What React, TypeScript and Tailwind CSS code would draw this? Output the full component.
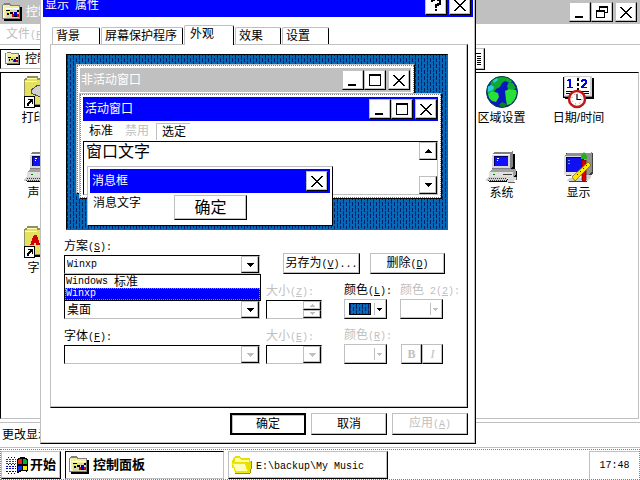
import React from 'react';
import type { ReactNode } from 'react';

const raised = 'bg-white border border-t-[#c0c0c0] border-l-[#c0c0c0] border-r-black border-b-black shadow-[inset_-1px_-1px_0_#c0c0c0]';
const sunken = 'bg-white border border-t-black border-l-black border-r-[#c0c0c0] border-b-[#c0c0c0]';
const pattern = 'bg-[#0868b8] bg-[image:conic-gradient(from_270deg_at_1px_5px,#002468_25%,transparent_0),conic-gradient(from_270deg_at_1px_4px,#002468_25%,transparent_0)] bg-[length:6px_6px] bg-[position:0_0,3px_3px]';

// Half width latin text, as drawn next to the Chinese glyphs
function Mono({ children }: { children: ReactNode }) {
    return <span className="font-['Liberation_Mono',monospace] text-[10px] whitespace-pre">{children}</span>;
}

function Key({ k, tail = '' }: { k: string; tail?: string }) {
    return <Mono>(<u>{k}</u>){tail}</Mono>;
}

function Arrow({ up = false, small = false, color = '#000' }: { up?: boolean; small?: boolean; color?: string }) {
    return (
        <svg width={small ? 5 : 7} height={small ? 3 : 4} viewBox="0 0 7 4" shapeRendering="crispEdges" aria-hidden="true">
            <path fill={color} d={up ? 'M3 0h1v1h1v1h1v1h1v1H0V3h1V2h1V1h1z' : 'M0 0h7v1H6v1H5v1H4v1H3V3H2V2H1V1H0z'} />
        </svg>
    );
}

function CaptionButton({ kind }: { kind: 'min' | 'max' | 'restore' | 'close' | 'help' }) {
    return (
        <button aria-label={kind} className={`${raised} flex h-[20px] w-[22px] shrink-0 items-center justify-center`}>
            <svg width="14" height="14" viewBox="0 0 14 14" fill="none" stroke="#000" shapeRendering="crispEdges">
                {kind === 'min' && <path strokeWidth="2" d="M2 12h8" />}
                {kind === 'max' && <path d="M1.5 2v10.500h11V2M1 1.500h12M1 2.500h12" />}
                {kind === 'restore' && <path d="M4.500 5V1.500h8v6H10M4 2.500h9M1.500 6v6.500h8V6M1 5.500h9M1 6.500h9" />}
                {kind === 'close' && (
                    <path
                        fill="#000"
                        stroke="none"
                        d="M1 2h2v1h1v1h1v1h1v1h2V5h1V4h1V3h1V2h2v1h-1v1h-1v1h-1v1H9v1H8v1h1v1h1v1h1v1h1v1h1v1h-2v-1h-1v-1H9v-1H8V9H6v1H5v1H4v1H3v1H1v-1h1v-1h1v-1h1V9h1V8h1V7H5V6H4V5H3V4H2V3H1z"
                    />
                )}
                {kind === 'help' && <path strokeWidth="2" d="M3 4V2h2V1h4v1h2v4H9v1H7v3M7 11v2" />}
            </svg>
        </button>
    );
}

function ControlFolder({ size = 20 }: { size?: number }) {
    return (
        <svg width={size} height={size} viewBox="0 0 20 20" shapeRendering="crispEdges" aria-hidden="true" className="shrink-0">
            <path fill="#000" d="M2 5h18v14H2z" />
            <path fill="#808080" d="M0 3h1V2h1V1h6v1h1v1h9v14H0z" />
            <path fill="#f0f0a0" d="M1 3h7v1h9v12H1z" />
            <path fill="#fff" d="M1 4h1v12H1zM3 6h14v1H3z" />
            <path fill="#d8d8b0" d="M4 8h13v8H4z" />
            <path fill="#000" d="M4 8h4v1H4zM8 10h3v2H8zM5 11h2v2H5zM12 14h3v1h-3zM15 8h2v2h-2z" />
            <path fill="#0000c0" d="M12 10h3v4h-3z" />
            <path fill="#d00000" d="M10 12h2v3h-2zM15 12h2v3h-2z" />
            <path fill="#ffff00" d="M6 9h2v2H6z" />
        </svg>
    );
}

function YellowFolder() {
    return (
        <svg width="22" height="20" viewBox="0 0 22 20" shapeRendering="crispEdges" aria-hidden="true" className="shrink-0">
            <path fill="#909000" d="M4 18h15v1H4zM20 6h1v8h-1v4h-1V6z" />
            <path fill="#e8e000" d="M2 3h1V2h1V1h5v1h1v1h9v3h1v8h-1v4H4v-2H3v-3H1V5h1z" />
            <path fill="#ffffa0" d="M4 3h5v1h1v1h8v2H4z" />
            <path fill="#f0e800" d="M1 8h14v2h1v3h1v3h1v2H4v-2H3v-3H2v-2H1z" />
            <path fill="#ffffb8" d="M2 9h12v2h1v3h1v2H5v-1H4v-3H3v-2H2z" />
        </svg>
    );
}

function WindowsFlag() {
    return (
        <svg width="24" height="18" viewBox="0 0 24 18" shapeRendering="crispEdges" aria-hidden="true" className="shrink-0">
            <path stroke="#e00000" strokeDasharray="2 1" d="M1 3.500h10M1 5.500h10M1 7.500h10" />
            <path stroke="#0000c0" strokeDasharray="2 1" d="M1 10.500h10M1 12.500h10M1 15.500h10" />
            <path stroke="#000" strokeDasharray="1 2" d="M3 1.500h8M3 8.500h8M3 17.500h8" />
            <path fill="#000" d="M12 3h1V2h2V1h5v1h2v1h1v12h-1v1h-1v-1h-5v1h-2v1h-2z" />
            <path fill="#f02010" d="M14 3h3v5h-4V4h1z" />
            <path fill="#00b030" d="M18 3h3v1h1v4h-4z" />
            <path fill="#1030f0" d="M13 10h4v4h-3v1h-1z" />
            <path fill="#f8e800" d="M18 10h4v4h-4z" />
        </svg>
    );
}

function Globe() {
    return (
        <svg width="32" height="32" viewBox="0 0 32 32" aria-hidden="true">
            <circle cx="16" cy="16" r="15.500" fill="#0818c0" />
            <path fill="#10a830" d="M5 5l5-4 6-1 7 2 4 3-3 2-5-2-3 2-2 4-4 2-3 4-5 1-1-3 3-4z" />
            <path fill="#28d0d8" d="M1 11l4-2 3 2-1 3-5 2zM7 4l4-2 1 2-4 3z" />
            <path fill="#10a830" d="M23 6l4 1 3 5-3 2-5-1-1-3z" />
            <path fill="#28e038" d="M2 18l4-3 6 2 1 4-3 5-4-1-3-3zM19 15l4-2 7 1 1 3-2 6-4 5-4 1-1-5z" />
            <path fill="#08801c" d="M13 29l3-3 5 2-2 3-4 0z" />
            <circle cx="16" cy="16" r="15.500" fill="none" stroke="#084048" />
        </svg>
    );
}

function Calendar() {
    return (
        <svg width="32" height="34" viewBox="0 0 32 34" shapeRendering="crispEdges" aria-hidden="true">
            <path fill="#000" d="M2 2h29v21H2z" />
            <path fill="#808080" d="M0 1h29v20H0z" />
            <path fill="#d0d0d0" d="M1 0h28v20H1z" />
            <path fill="#fff" d="M2 1h11l2 2 2-2h10v18H17l-2 1-2-1H2z" />
            <path fill="#000" d="M0 1h1v20H0zM0 21h31v1H0zM14 2h2v3h-2zM14 7h2v3h-2zM14 12h2v3h-2zM3 15h8v1H3zM18 15h8v1h-8zM3 17h8v1H3zM18 17h8v1h-8z" />
            <path fill="#0000e0" d="M5 3h3v8h2v1H4v-1h2V5H4V4h1zM19 3h4v1h1v4h-1v1h-1v1h-1v1h3v1h-6v-2h1V9h1V8h1V7h1V5h-2v1h-2V4h1z" />
            <g shapeRendering="auto">
                <circle cx="14" cy="23" r="8" fill="#fff" stroke="#c01818" strokeWidth="2.500" />
                <path stroke="#000" fill="none" strokeWidth="1.200" d="M14 18v5.500h4" />
                <path stroke="#e06060" strokeDasharray="1 3" fill="none" d="M14 18a5 5 0 1 1-.1 0" />
            </g>
        </svg>
    );
}

function Computer() {
    return (
        <svg width="32" height="32" viewBox="0 0 32 32" shapeRendering="crispEdges" aria-hidden="true">
            <path fill="#000" d="M8 3h21v15H8zM6 20h25v6H6zM3 28h20v3H3z" />
            <path fill="#808080" d="M6 3l3-3h18v15l-3 3H6z" />
            <path fill="#d8d8d8" d="M6 3h18v14H6z" />
            <path fill="#fff" d="M8 0h18v1H8zM6 3h18v1H6z" />
            <path fill="#000060" d="M8 5h14v10H8z" />
            <path fill="#1010ff" d="M9 6h13v9H9z" />
            <path fill="#fff" d="M11 7h2v1h-2zM11 9h1v1h-1z" />
            <path fill="#a0a0a0" d="M3 21l3-3h24v5l-2 3H3z" />
            <path fill="#e0e0e0" d="M3 21h24v5H3z" />
            <path fill="#008000" d="M7 23h2v1H7z" />
            <path fill="#404040" d="M17 23h9v1h-9z" />
            <path fill="#d0d0d0" d="M2 26h20l-2 4H0v-2h1z" />
            <path stroke="#404040" strokeDasharray="1 1" d="M3 27.500h17M2 29.500h17" />
            <path fill="#d8d8d8" d="M22 26h8v3h-2v2h-7v-2h1z" />
            <path fill="#606060" d="M22 31h7v1h-7zM30 26h1v3h-1z" />
        </svg>
    );
}

function DisplayIcon() {
    return (
        <svg width="32" height="32" viewBox="0 0 32 32" shapeRendering="crispEdges" aria-hidden="true">
            <path fill="#404040" d="M3 2h27v20l-3 3H3zM6 29h18v2H6z" />
            <path fill="#909090" d="M1 5l5-4h23v20l-4 3H1z" />
            <path fill="#e0e0e0" d="M1 5h22v19H1z" />
            <path fill="#fff" d="M5 1h23v1H5z" />
            <path fill="#000060" d="M3 6h18v15H3z" />
            <path fill="#1010f0" d="M4 7h17v14H4z" />
            <path fill="#60a0ff" d="M5 9h2v1H5zM5 12h2v1H5z" />
            <path fill="#d0d0d0" d="M8 25h14v2H6l-2 2v1h20l4-3v-3H8z" />
            <g shapeRendering="auto">
                <path fill="#e00000" stroke="#600000" strokeWidth=".7" d="M19 9h4v20l-2 2-2-2z" />
                <path fill="#20b020" d="M21 1l3 4v3h-6V5z" />
                <path fill="#ffe800" stroke="#706000" strokeWidth=".7" d="M9 26L25 11l3 3-16 16z" />
                <path stroke="#000" strokeWidth=".8" d="M14 23l1 1M17 20l1 1M20 17l1 1M23 14l1 1" />
            </g>
        </svg>
    );
}

function ShortcutFolder({ font = false }: { font?: boolean }) {
    return (
        <svg width="32" height="32" viewBox="0 0 32 32" shapeRendering="crispEdges" aria-hidden="true">
            <path fill="#000" d="M2 4h29v27H2z" />
            <path fill="#909060" d="M0 3h1V2h2V0h11v2h2v1h14v26H0z" />
            <path fill="#e4e060" d="M1 4h2V2h10v2h16v24H1z" />
            <path fill="#ffffb0" d="M3 2h10v1H3zM1 5h12v1H1z" />
            {font
                ? <path fill="#d00000" d="M10 9h3v2h1v3h1v3h1v2h-4v-2h-2v2H6v-1h1v-3h1v-3h1v-2h1zM18 6h3v3h-3z" />
                : <path fill="#d0d0d0" stroke="#505050" d="M7 14l7-5h10v8l-8 4-9-4z" />}
            <path fill="#000" d="M0 20h11v12H0z" />
            <path fill="#fff" d="M1 21h9v10H1z" />
            <path fill="#000" d="M4 23h5v5H8v-2H7v1H6v1H5v2H3v-3h1v-1h1v-1h1v-1H4z" />
        </svg>
    );
}

const icons = [
    { label: '打印机', icon: <ShortcutFolder />, cell: 'col-start-1 row-start-1' },
    { label: '区域设置', icon: <Globe />, cell: 'col-start-7 row-start-1' },
    { label: '日期/时间', icon: <Calendar />, cell: 'col-start-8 row-start-1' },
    { label: '声音', icon: <Computer />, cell: 'col-start-1 row-start-2' },
    { label: '系统', icon: <Computer />, cell: 'col-start-7 row-start-2' },
    { label: '显示', icon: <DisplayIcon />, cell: 'col-start-8 row-start-2' },
    { label: '字体', icon: <ShortcutFolder font />, cell: 'col-start-1 row-start-3' },
];

function ControlPanel() {
    return (
        <main className="flex min-h-0 flex-1 flex-col">
            <header className="flex h-[24px] shrink-0 items-center bg-[#c0c0c0] pr-[3px] pl-[2px] text-white">
                <ControlFolder />
                <h1 className="ml-1 flex-1">控制面板</h1>
                <CaptionButton kind="min" />
                <CaptionButton kind="restore" />
                <span className="w-[2px]" />
                <CaptionButton kind="close" />
            </header>
            <nav className="flex h-[21px] shrink-0 items-center border-b border-[#c0c0c0] pl-[6px] text-[#c0c0c0]">
                <button>文件<Key k="F" /></button>
            </nav>
            <div className="flex h-[27px] shrink-0 items-center">
                <div className={`${sunken} flex h-[20px] w-[300px] items-center pl-1`}>
                    <ControlFolder size={15} />
                    <span className="ml-[5px]">控制面板</span>
                </div>
                <button aria-label="详细资料" className={`${raised} ml-[161px] flex h-[22px] w-[24px] items-center justify-end pr-[3px]`}>
                    <svg width="14" height="14" viewBox="0 0 14 14" shapeRendering="crispEdges">
                        <path stroke="#000" d="M1 1.500h13M2 4.500h2M10 4.500h4M2 6.500h2M10 6.500h4M2 8.500h2M10 8.500h4M2 10.500h2M10 10.500h4M2 12.500h2M10 12.500h4" />
                    </svg>
                </button>
            </div>
            <ul className="mr-[1px] grid min-h-0 flex-1 grid-cols-[repeat(8,77px)] content-start border border-t-black border-r-[#c0c0c0] border-b-[#c0c0c0] border-l-black pt-[3px]">
                {icons.map((item) => (
                    <li key={item.label} className={`flex h-[75px] flex-col items-center ${item.cell}`}>
                        <span className="h-[34px]">{item.icon}</span>
                        <span className="leading-4">{item.label}</span>
                    </li>
                ))}
            </ul>
            <footer className="mt-[3px] flex h-[25px] shrink-0 items-center border-t border-[#c0c0c0] pl-[2px]">更改显示的设置。</footer>
        </main>
    );
}

function Preview() {
    return (
        <div className={`relative mt-[9px] mr-[19px] ml-[15px] h-[176px] overflow-hidden border border-t-black border-l-black border-r-[#0868b8] border-b-[#0868b8] ${pattern}`}>
            <div className="absolute top-[9px] left-[9px] h-[130px] w-[339px] border border-[#c0c0c0] border-r-black border-b-black bg-white">
                <div className="h-full border border-dotted border-[#808080] p-[2px]">
                    <div className="flex h-[24px] items-center bg-[#c0c0c0] pr-[1px] pl-[1px] text-white">
                        <span className="flex-1">非活动窗口</span>
                        <CaptionButton kind="min" />
                        <CaptionButton kind="max" />
                        <span className="w-[2px]" />
                        <CaptionButton kind="close" />
                    </div>
                </div>
            </div>
            <div className="absolute top-[38px] left-[12px] h-[106px] w-[363px] border border-[#c0c0c0] border-r-black border-b-black bg-white">
                <div className="flex h-full flex-col border border-dotted border-[#808080] p-[2px]">
                    <div className="flex h-[24px] shrink-0 items-center bg-[#0000ff] pr-[1px] pl-[2px] text-white">
                        <span className="flex-1">活动窗口</span>
                        <CaptionButton kind="min" />
                        <CaptionButton kind="max" />
                        <span className="w-[2px]" />
                        <CaptionButton kind="close" />
                    </div>
                    <div className="flex h-[20px] shrink-0 items-center pl-[6px]">
                        <span>标准</span>
                        <span className="ml-3 text-[#c0c0c0]">禁用</span>
                        <span className="ml-[7px] w-[34px] border-t border-l border-[#c0c0c0] pl-[5px] leading-4">选定</span>
                    </div>
                    <div className={`${sunken} flex flex-1 justify-between pl-[2px]`}>
                        <p className="text-base leading-5">窗口文字</p>
                        <div className="flex flex-col justify-between">
                            <button aria-label="向上" className={`${raised} flex h-[18px] w-[18px] items-center justify-center`}><Arrow up /></button>
                            <button aria-label="向下" className={`${raised} flex h-[18px] w-[18px] items-center justify-center`}><Arrow /></button>
                        </div>
                    </div>
                </div>
            </div>
            <div className="absolute top-[111px] left-[20px] h-[60px] w-[246px] border border-[#c0c0c0] border-r-black border-b-black bg-white p-[2px]">
                <div className="flex h-[24px] items-center bg-[#0000ff] pr-[2px] pl-[2px] text-white">
                    <span className="flex-1">消息框</span>
                    <CaptionButton kind="close" />
                </div>
                <div className="flex pt-[2px] pl-[3px]">
                    <span className="leading-4">消息文字</span>
                    <button className={`${raised} ml-[33px] h-[25px] w-[73px] text-base leading-5`}>确定</button>
                </div>
            </div>
        </div>
    );
}

function Select({ id, width, options, name, disabled = false, mono = false }: { id: string; width: string; options: string[]; name?: string; disabled?: boolean; mono?: boolean }) {
    return (
        <div className={`${sunken} relative flex h-[19px] ${width}`}>
            <select
                id={id}
                aria-label={name}
                disabled={disabled}
                className={mono
                    ? "w-full appearance-none bg-white pl-[2px] font-['Liberation_Mono',monospace] text-[10px] leading-4 outline-none"
                    : 'w-full appearance-none bg-white pl-[2px] leading-4 outline-none'}
            >
                {options.map((o) => <option key={o}>{o}</option>)}
            </select>
            <span className={`${raised} pointer-events-none absolute inset-y-0 right-0 flex w-[18px] items-center justify-center`}>
                <Arrow color={disabled ? '#c0c0c0' : '#000'} />
            </span>
        </div>
    );
}

function ColorButton({ id, swatch = false }: { id: string; swatch?: boolean }) {
    return (
        <button id={id} disabled={!swatch} className={`${raised} flex h-[20px] w-[43px] items-center justify-end pr-1`}>
            {swatch && <span className={`mr-[3px] h-[12px] w-[22px] border border-black ${pattern}`} />}
            <span className="mr-[2px] h-[12px] w-px bg-[#c0c0c0]" />
            <Arrow small color={swatch ? '#000' : '#c0c0c0'} />
        </button>
    );
}

function Field({ id, label, k, className = '', disabled = false, children }: { id: string; label: string; k: ReactNode; className?: string; disabled?: boolean; children: ReactNode }) {
    return (
        <div className={`flex flex-col gap-[1px] ${className}`}>
            <label htmlFor={id} className={disabled ? 'h-4 leading-4 whitespace-nowrap text-[#c0c0c0]' : 'h-4 leading-4 whitespace-nowrap'}>{label}{k}</label>
            {children}
        </div>
    );
}

function AppearanceForm() {
    return (
        <form className="mt-[8px] flex flex-col gap-2 pl-[13px]" onSubmit={(e) => e.preventDefault()}>
            <div className="relative flex items-end">
                <Field id="scheme" label="方案" k={<Key k="S" tail=":" />}>
                    <Select id="scheme" width="w-[196px]" options={['Winxp', 'Windows 标准']} mono />
                </Field>
                <button type="button" className={`${raised} ml-[23px] h-[21px] w-[77px] leading-4`}>另存为<Key k="V" tail="..." /></button>
                <button type="button" className={`${raised} ml-[10px] h-[21px] w-[75px] leading-4`}>删除<Key k="D" /></button>
                <ul role="listbox" aria-label="方案" className="absolute top-full left-0 z-10 w-[197px] border border-black bg-white">
                    <li role="option" aria-selected="false" className="flex h-[13px] items-center pl-[1px] leading-3"><Mono>Windows </Mono>标准</li>
                    <li role="option" aria-selected="true" className="flex h-[12px] items-center border border-dotted border-[#8080ff] bg-[#0000ff] leading-[10px] text-white"><Mono>Winxp</Mono></li>
                </ul>
            </div>
            <div className="flex items-end">
                <Select id="item" name="项目" width="w-[196px]" options={['桌面']} />
                <Field id="size" label="大小" k={<Key k="Z" tail=":" />} className="ml-[6px]" disabled>
                    <div className={`${sunken} flex h-[19px] w-[56px]`}>
                        <input id="size" disabled className="w-[36px] bg-white" />
                        <div className="flex flex-1 flex-col">
                            <button type="button" disabled aria-label="增大" className={`${raised} flex flex-1 items-center justify-center`}><Arrow up small color="#c0c0c0" /></button>
                            <button type="button" disabled aria-label="减小" className={`${raised} flex flex-1 items-center justify-center`}><Arrow small color="#c0c0c0" /></button>
                        </div>
                    </div>
                </Field>
                <Field id="color1" label="颜色" k={<Key k="L" tail=":" />} className="ml-[22px] w-[43px]">
                    <ColorButton id="color1" swatch />
                </Field>
                <Field id="color2" label="颜色" k={<Mono> 2(<u>2</u>):</Mono>} className="ml-[13px] w-[43px]" disabled>
                    <ColorButton id="color2" />
                </Field>
            </div>
            <div className="flex items-end">
                <Field id="font" label="字体" k={<Key k="F" tail=":" />}>
                    <Select id="font" width="w-[196px]" options={[]} disabled />
                </Field>
                <Field id="fontsize" label="大小" k={<Key k="E" tail=":" />} className="ml-[6px]" disabled>
                    <Select id="fontsize" width="w-[56px]" options={[]} disabled />
                </Field>
                <Field id="fontcolor" label="颜色" k={<Key k="R" tail=":" />} className="ml-[22px] w-[43px]" disabled>
                    <ColorButton id="fontcolor" />
                </Field>
                <button type="button" disabled className={`${raised} ml-[14px] h-[20px] w-[21px] font-['Liberation_Serif',serif] leading-4 font-bold text-[#c0c0c0]`}>B</button>
                <button type="button" disabled className={`${raised} h-[20px] w-[21px] font-['Liberation_Serif',serif] leading-4 text-[#c0c0c0] italic`}>I</button>
            </div>
        </form>
    );
}

const tabs = [
    { label: '背景', width: 'w-[48px]' },
    { label: '屏幕保护程序', width: 'w-[82px]' },
    { label: '外观', width: 'w-[50px]' },
    { label: '效果', width: 'w-[46px]' },
    { label: '设置', width: 'w-[47px]' },
];

function DisplayDialog() {
    return (
        <section role="dialog" aria-label="显示 属性" className="absolute -top-[10px] left-10 flex w-[436px] flex-col border border-t-[#c0c0c0] border-r-black border-b-black border-l-[#c0c0c0] bg-white p-[2px] pb-[8px] shadow-[inset_-1px_-1px_0_#c0c0c0]">
            <header className="flex h-[24px] items-center bg-[#0000ff] pr-[2px] pl-[2px] text-white">
                <h2 className="flex-1">显示<Mono> </Mono>属性</h2>
                <CaptionButton kind="help" />
                <span className="w-[2px]" />
                <CaptionButton kind="close" />
            </header>
            <div role="tablist" className="mt-2 flex h-[19px] items-end gap-[1px] pl-[9px]">
                {tabs.map((tab) => {
                    const active = tab.label === '外观';
                    return (
                        <button
                            key={tab.label}
                            role="tab"
                            aria-selected={active}
                            className={`${tab.width} rounded-t-[2px] border-t border-r border-l border-t-[#c0c0c0] border-r-black border-l-[#c0c0c0] bg-white text-left leading-4 whitespace-nowrap ${active ? 'relative z-10 -mb-px h-5 pb-1 pl-[5px]' : 'h-[17px] pl-[3px]'}`}
                        >
                            {tab.label}
                        </button>
                    );
                })}
            </div>
            <div role="tabpanel" className="mr-[5px] ml-[7px] h-[364px] border border-t-[#c0c0c0] border-r-black border-b-black border-l-[#c0c0c0] shadow-[inset_-1px_-1px_0_#c0c0c0]">
                <Preview />
                <AppearanceForm />
            </div>
            <div className="mt-[5px] flex justify-end gap-[5px] pr-[5px]">
                <button className="h-[22px] w-[76px] border-2 border-black bg-white leading-4 shadow-[inset_1px_1px_0_#c0c0c0]">确定</button>
                <button className={`${raised} h-[22px] w-[76px] leading-4`}>取消</button>
                <button disabled className={`${raised} h-[22px] w-[76px] leading-4 text-[#c0c0c0]`}>应用<Key k="A" /></button>
            </div>
        </section>
    );
}

function Taskbar() {
    return (
        <footer className="flex h-[33px] shrink-0 flex-col border-t border-[#c0c0c0]">
            <div className="mt-[1px] flex flex-1 items-center border border-dotted border-[#808080]">
                <button className={`${raised} flex h-[28px] w-[60px] items-center pl-[3px] text-[13px] font-bold`}>
                    <WindowsFlag /><span className="ml-[1px] whitespace-nowrap">开始</span>
                </button>
                <button className={`${sunken} ml-1 flex h-[28px] w-[159px] items-center pl-[3px] text-[13px] font-bold`}>
                    <ControlFolder /><span className="ml-1">控制面板</span>
                </button>
                <button className={`${raised} ml-1 flex h-[28px] w-[160px] items-center pl-[2px]`}>
                    <YellowFolder /><span className="ml-[3px]"><Mono>E:\backup\My Music</Mono></span>
                </button>
                <time className="ml-auto flex h-[28px] w-[50px] items-center justify-center border-t border-l border-[#c0c0c0]"><Mono>17:48</Mono></time>
            </div>
        </footer>
    );
}

export default function App() {
    return (
        <div className="relative flex h-screen flex-col overflow-hidden bg-white font-['Liberation_Sans','Noto_Sans_CJK_SC',sans-serif] text-[12px] text-black">
            <ControlPanel />
            <Taskbar />
            <DisplayDialog />
        </div>
    );
}
